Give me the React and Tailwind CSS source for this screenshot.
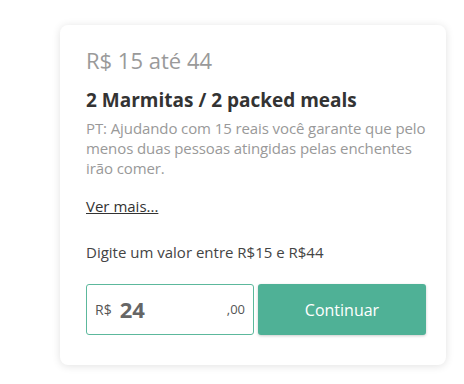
export default function App() {
  return (
    <div className="w-[464px] h-[384px] bg-white pt-[25px] pl-[60px]" style={{ fontFamily: '"Open Sans", "Noto Sans", sans-serif' }}>
      <div className="w-[386px] h-[340px] rounded-lg bg-white shadow-[0_1px_8px_rgba(0,0,0,0.12)] pl-[26px] pr-[20px] pt-[21px]">
        <div className="text-[22px] leading-[28px] text-[#9a9a9a]">R$ 15 até 44</div>
        <div className="mt-[14px] text-[19px] leading-[24px] font-bold text-[#333]">2 Marmitas / 2 packed meals</div>
        <p className="text-[15px] leading-[20px] text-[#999] mt-[6px] tracking-[-0.1px]">
          PT: Ajudando com 15 reais você garante que pelo menos duas pessoas atingidas pelas enchentes irão comer.
        </p>
        <a className="block mt-[18px] text-[15px] leading-[20px] text-[#333] underline">Ver mais...</a>
        <div className="mt-[26px] text-[15px] leading-[20px] text-[#444]">Digite um valor entre R$15 e R$44</div>
        <div className="mt-[22px] flex gap-[4px]">
          <div className="w-[168px] h-[51px] border border-[#5cb89c] rounded-[3px] flex items-center px-[8px]">
            <span className="text-[14px] text-[#555]">R$</span>
            <span className="ml-[8px] text-[22px] font-bold text-[#666]">24</span>
            <span className="ml-auto text-[13px] text-[#555]">,00</span>
          </div>
          <button className="w-[168px] h-[51px] rounded-[3px] bg-[#4fb196] text-white text-[16px] shadow-[0_1px_3px_rgba(0,0,0,0.2)]">Continuar</button>
        </div>
      </div>
    </div>
  );
}
